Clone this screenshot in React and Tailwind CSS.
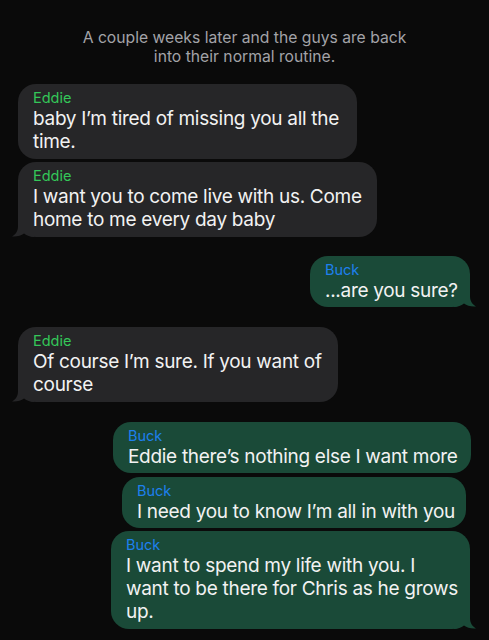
const FONT = { fontFamily: 'Inter, "Noto Sans", "Liberation Sans", sans-serif' };

function Tail({ side, color }) {
  const pos = side === "left" ? "-left-[6px]" : "-right-[6px] -scale-x-100";
  return (
    <svg
      className={`absolute bottom-0 ${pos}`}
      width="22"
      height="20"
      viewBox="0 0 22 20"
    >
      <path
        d="M6 0 L6 9 C6 14 4 17 0 19.5 C5 20 9 18.5 12 16.5 C15 18.5 18 20 22 20 L22 0 Z"
        fill={color}
      />
    </svg>
  );
}

function Bubble({ name, lines, mine, tail, className }) {
  const bg = mine ? "bg-[#1a4a38]" : "bg-[#262628]";
  const color = mine ? "#1a4a38" : "#262628";
  const pb = lines.length === 1 ? "pb-[5px]" : "pb-[6px]";
  return (
    <div className={`relative rounded-[18px] pl-[15px] pr-[4px] pt-[5px] ${pb} ${bg} ${className}`}>
      <div
        className={`text-[14.5px] leading-[18px] ${mine ? "text-[#1e80ee]" : "text-[#34c759]"}`}
      >
        {name}
      </div>
      <div className="relative z-10 text-[19px] leading-[23px] tracking-[-0.3px] text-[#f2f2f2]">
        {lines.map((l, i) => (
          <div key={i} className="whitespace-nowrap">
            {l}
          </div>
        ))}
      </div>
      {tail && <Tail side={mine ? "right" : "left"} color={color} />}
    </div>
  );
}

export default function App() {
  return (
    <div className="min-h-[640px] w-[489px] bg-[#0a0a0a] pt-[28px]" style={FONT}>
      <p className="text-center text-[15.7px] leading-[19px] text-[#a3a3a8]">
        A couple weeks later and the guys are back
        <br />
        into their normal routine.
      </p>
      <div className="mt-[18px] flex flex-col">
        <Bubble
          name="Eddie"
          lines={["baby I’m tired of missing you all the", "time."]}
          className="ml-[18px] w-[339px]"
        />
        <Bubble
          name="Eddie"
          lines={["I want you to come live with us. Come", "home to me every day baby"]}
          tail
          className="ml-[18px] mt-[3px] w-[359px]"
        />
        <Bubble
          name="Buck"
          lines={["...are you sure?"]}
          mine
          tail
          className="ml-[310px] mt-[19px] w-[160px]"
        />
        <Bubble
          name="Eddie"
          lines={["Of course I’m sure. If you want of", "course"]}
          tail
          className="ml-[18px] mt-[20px] w-[320px]"
        />
        <Bubble
          name="Buck"
          lines={["Eddie there’s nothing else I want more"]}
          mine
          className="ml-[113px] mt-[20px] w-[358px]"
        />
        <Bubble
          name="Buck"
          lines={["I need you to know I’m all in with you"]}
          mine
          className="ml-[122px] mt-[4px] w-[344px]"
        />
        <Bubble
          name="Buck"
          lines={[
            "I want to spend my life with you. I",
            "want to be there for Chris as he grows",
            "up.",
          ]}
          mine
          tail
          className="ml-[111px] mt-[3px] w-[359px]"
        />
      </div>
    </div>
  );
}
